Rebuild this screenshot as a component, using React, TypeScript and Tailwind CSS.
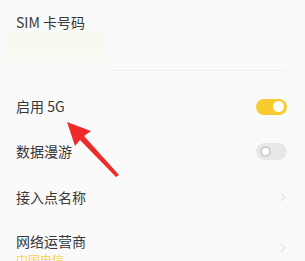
import { ChevronRight } from "lucide-react";

const Toggle = ({ on }: { on: boolean }) =>
  on ? (
    <div className="flex h-[16px] w-[31px] items-center justify-end rounded-full bg-[#f8cb2e] pr-[3px]">
      <div className="h-[11px] w-[11px] rounded-full bg-white" />
    </div>
  ) : (
    <div className="flex h-[17px] w-[31px] items-center justify-start rounded-full bg-[#e8e8e8] pl-[4px]">
      <div className="h-[11px] w-[11px] rounded-full border-[2px] border-[#cfcfcf] bg-white" />
    </div>
  );

const App = () => {
  return (
    <div
      className="relative h-[261px] w-[305px] overflow-hidden bg-[#fafafa] text-[#383838]"
      style={{ fontFamily: '"Noto Sans CJK SC", "Noto Sans", sans-serif' }}
    >
      <div className="px-[16px] pt-[14px] text-[14px] leading-[16px]">SIM 卡号码</div>
      <div className="ml-[5px] mt-[3px] h-[32px] w-[100px] bg-gradient-to-b from-[#f8f7ec] to-[#fbfbf6] blur-[2px]" />
      <div className="ml-[113px] mr-[19px] mt-[5px] h-px bg-[#efefef]" />

      <div className="mt-[13px] flex h-[45px] items-center justify-between pl-[16px] pr-[18px]">
        <span className="text-[14px]">启用 5G</span>
        <Toggle on />
      </div>
      <div className="flex h-[45px] items-center justify-between pl-[16px] pr-[18px]">
        <span className="text-[14px]">数据漫游</span>
        <Toggle on={false} />
      </div>
      <div className="flex h-[46px] items-center justify-between pl-[16px] pr-[15px]">
        <span className="text-[14px]">接入点名称</span>
        <ChevronRight className="h-[14px] w-[14px] text-[#c9c9c9]" strokeWidth={1.5} />
      </div>
      <div className="flex items-start justify-between pl-[16px] pr-[15px] pt-[11px]">
        <div className="flex flex-col">
          <span className="text-[14px] leading-[20px]">网络运营商</span>
          <span className="mt-[2px] text-[12px] leading-[14px] text-[#f5d64e]">中国电信</span>
        </div>
        <ChevronRight className="mt-[10px] h-[14px] w-[14px] text-[#c9c9c9]" strokeWidth={1.5} />
      </div>

      <svg className="absolute left-0 top-0" width="305" height="261" viewBox="0 0 305 261">
        <path
          d="M67 122 L91 131 L84 136 L119 175 L116 177 L80 140 L75 146 Z"
          fill="#ee2a2a"
        />
      </svg>
    </div>
  );
};

export default App;
